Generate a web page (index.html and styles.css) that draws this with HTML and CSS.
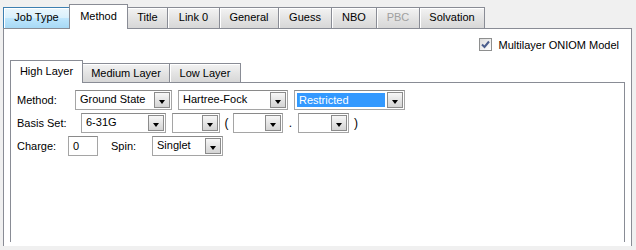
FILE: index.html
```html
<!doctype html>
<html lang="en">
    <head>
        <meta charset="utf-8">
        <title>Method</title>
        <link rel="stylesheet" href="styles.css">
    </head>
    <body>
        <div id="dialog">
            <div class="tabs">
                <div class="tab hover" style="width:66px">Job Type</div>
                <div class="tab sel" style="width:59px">Method</div>
                <div class="tab" style="width:40px">Title</div>
                <div class="tab" style="width:52px">Link 0</div>
                <div class="tab" style="width:59px">General</div>
                <div class="tab" style="width:53px">Guess</div>
                <div class="tab" style="width:45px">NBO</div>
                <div class="tab off" style="width:43px">PBC</div>
                <div class="tab last" style="width:66px">Solvation</div>
            </div>
            <div class="panel">
                <div class="oniom">
                    <span class="check">
                        <svg width="11" height="11" viewBox="0 0 11 11"><path d="M2 5.5 L4.5 8 L9 2.5" fill="none" stroke="#4a5d8c" stroke-width="2"/></svg>
                    </span>
                    <span>Multilayer ONIOM Model</span>
                </div>
                <div class="tabs small">
                    <div class="tab sel" style="width:73px">High Layer</div>
                    <div class="tab" style="width:87px">Medium Layer</div>
                    <div class="tab last" style="width:72px">Low Layer</div>
                </div>
                <div class="inner">
                    <div class="row">
                        <span class="lbl" style="width:58px">Method:</span>
                        <div class="combo" style="width:97px"><span class="val">Ground State</span><i></i></div>
                        <div class="combo" style="width:110px"><span class="val">Hartree-Fock</span><i></i></div>
                        <div class="combo" style="width:111px"><span class="val picked">Restricted</span><i></i></div>
                    </div>
                    <div class="row">
                        <span class="lbl" style="width:64px">Basis Set:</span>
                        <div class="combo" style="width:85px"><span class="val">6-31G</span><i></i></div>
                        <div class="combo nogap" style="width:48px"><span class="val"></span><i></i></div>
                        <span class="sep" style="width:13px">(</span>
                        <div class="combo nogap" style="width:50px"><span class="val"></span><i></i></div>
                        <span class="sep" style="width:15px">.</span>
                        <div class="combo nogap" style="width:51px"><span class="val"></span><i></i></div>
                        <span class="sep" style="width:14px">)</span>
                    </div>
                    <div class="row">
                        <span class="lbl" style="width:51px">Charge:</span>
                        <span class="field" style="width:30px">0</span>
                        <span class="lbl spin" style="width:41px">Spin:</span>
                        <div class="combo nogap" style="width:71px"><span class="val">Singlet</span><i></i></div>
                    </div>
                </div>
            </div>
        </div>
    </body>
</html>
```
FILE: styles.css
```css
html, body { margin: 0; height: 100%; }
body { background: #f0f0f0; font-family: "Liberation Sans", Arial, sans-serif; font-size: 11px; color: #000; overflow: hidden; }
#dialog { width: 629px; margin-left: 3px; }

/*tabs*/
.tabs { display: flex; align-items: flex-end; height: 28px; }
.tab {
    box-sizing: border-box;
    height: 21px;
    line-height: 19px;
    text-align: center;
    border: 1px solid #898c95;
    border-right: 0;
    border-bottom: 0;
    background: linear-gradient(#f3f3f3, #e4e4e4 50%, #d7d7d7);
    box-shadow: inset 1px 1px 0 #fff;
    white-space: nowrap;
}
.tab.last { border-right: 1px solid #898c95; }
.tab.hover { background: linear-gradient(#eaf6fd, #d9f0fc 50%, #bee6fd 51%, #a7d9f5); border-color: #3c7fb1; }
.tab.off { color: #a0a0a0; }
.tab.sel {
    height: 25px;
    padding-top: 2px;
    background: #fff;
    box-shadow: none;
    border-right: 1px solid #898c95;
    margin-right: -1px;
    margin-bottom: -1px;
    position: relative;
    z-index: 1;
}
.tab.sel + .tab { border-left: 0; padding-left: 1px; }

.panel {
    box-sizing: border-box;
    background: #fff;
    border: 1px solid #898c95;
    border-bottom: 0;
    height: 218px;
    padding: 9px 6px 0 6px;
}
.oniom { display: flex; justify-content: flex-end; align-items: center; gap: 7px; padding-right: 6px; height: 13px; }
.check {
    box-sizing: border-box;
    width: 13px;
    height: 13px;
    border: 1px solid #8e8f8f;
    background: linear-gradient(135deg, #dcdcdc, #fff);
    display: flex;
    align-items: center;
    justify-content: center;
}
.check svg { display: block; }

.tabs.small { height: 31px; }
.tabs.small .tab { height: 19px; line-height: 18px; }
.tabs.small .tab.sel { height: 23px; padding-top: 1px; line-height: 19px; }

.inner {
    box-sizing: border-box;
    border: 1px solid #898c95;
    border-bottom: 0;
    height: 160px;
    padding: 7px 6px 0 6px;
}

/*form rows*/
.row { display: flex; align-items: center; height: 20px; margin-bottom: 3px; }
.row:last-child { margin-top: 1px; }
.lbl { flex: none; }
.spin { margin-left: 13px; }
.sep { flex: none; text-align: center; font-size: 12px; }
.combo {
    box-sizing: border-box;
    flex: none;
    display: flex;
    height: 20px;
    margin-right: 6px;
    border: 1px solid #a5a5a5;
    border-top-color: #8a8a8a;
    background: #fff;
    padding: 1px;
}
.combo.nogap { margin-right: 0; }
.combo .val { flex: 1; min-width: 0; padding: 0 3px; line-height: 15px; white-space: nowrap; overflow: hidden; }
.combo .val.picked { background: #3399ff; color: #fff; margin: 1px 2px 1px 1px; line-height: 14px; padding-left: 2px; }
.combo i {
    box-sizing: border-box;
    flex: none;
    width: 16px;
    border: 1px solid #8b8b8b;
    background: linear-gradient(#f7f7f7, #e5e5e5 50%, #d4d4d4);
    position: relative;
}
.combo i:after {
    content: "";
    position: absolute;
    left: 4px;
    top: 7px;
    border-left: 3.5px solid transparent;
    border-right: 3.5px solid transparent;
    border-top: 4px solid #000;
}
.field {
    box-sizing: border-box;
    flex: none;
    height: 20px;
    border: 1px solid #a5a5a5;
    border-top-color: #8a8a8a;
    padding: 1px 4px;
    line-height: 16px;
}
```
